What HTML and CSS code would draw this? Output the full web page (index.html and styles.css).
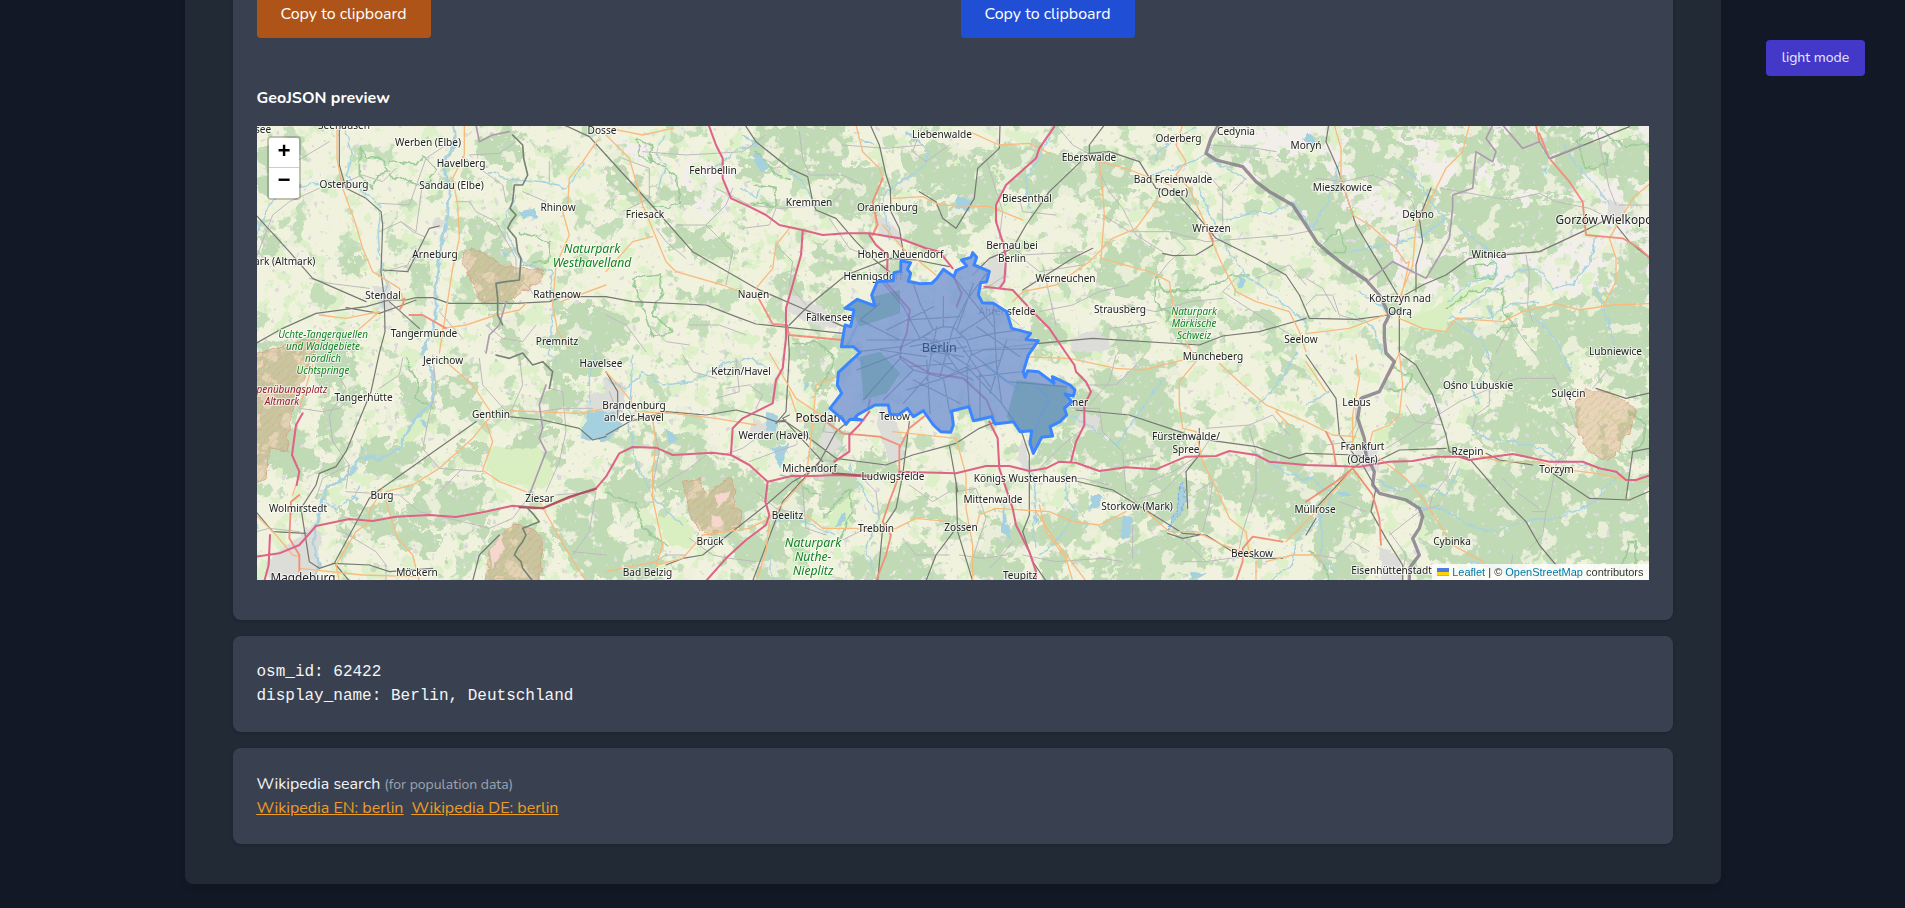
FILE: index.html
```html
<!DOCTYPE html>
<html lang="en">
<head>
<meta charset="utf-8">
<title>GeoJSON preview</title>
<link rel="stylesheet" href="styles.css">
</head>
<body>
<button class="mode">light mode</button>
<main class="page">
  <section class="card first">
    <div class="actions">
      <div><button class="btn orange">Copy to clipboard</button></div>
      <div><button class="btn blue">Copy to clipboard</button></div>
    </div>
    <h2 class="title">GeoJSON preview</h2>
    <div class="map">
      <svg class="tiles" viewBox="257 126 1392 454" width="1392" height="454">
        <defs>
          <filter id="rough" filterUnits="userSpaceOnUse" x="240" y="110" width="1430" height="490">
            <feTurbulence type="fractalNoise" baseFrequency="0.07" numOctaves="4" seed="4" result="n"/>
            <feDisplacementMap in="SourceGraphic" in2="n" scale="38" xChannelSelector="R" yChannelSelector="G"/>
          </filter>
          <filter id="wiggle" filterUnits="userSpaceOnUse" x="240" y="110" width="1430" height="490">
            <feTurbulence type="fractalNoise" baseFrequency="0.12" numOctaves="2" seed="9" result="n"/>
            <feDisplacementMap in="SourceGraphic" in2="n" scale="7" xChannelSelector="R" yChannelSelector="G"/>
          </filter>
          <filter id="meadow" filterUnits="userSpaceOnUse" x="257" y="126" width="1392" height="454" color-interpolation-filters="sRGB">
            <feTurbulence type="fractalNoise" baseFrequency="0.055" numOctaves="4" seed="21"/>
            <feColorMatrix values="0 0 0 0 .87  0 0 0 0 .94  0 0 0 0 .79  22 0 0 0 -12.4"/>
          </filter>
          <filter id="woods" filterUnits="userSpaceOnUse" x="257" y="126" width="1392" height="454" color-interpolation-filters="sRGB">
            <feTurbulence type="fractalNoise" baseFrequency="0.042" numOctaves="5" seed="7"/>
            <feColorMatrix values="0 0 0 0 .765  0 0 0 0 .87  0 0 0 0 .72  0 25 0 0 -15.4"/>
          </filter>
          <filter id="clearing" filterUnits="userSpaceOnUse" x="257" y="126" width="1392" height="454" color-interpolation-filters="sRGB">
            <feTurbulence type="fractalNoise" baseFrequency="0.05" numOctaves="4" seed="33"/>
            <feColorMatrix values="0 0 0 0 .94  0 0 0 0 .945  0 0 0 0 .87  0 0 25 0 -15"/>
          </filter>
          <filter id="hamlet" filterUnits="userSpaceOnUse" x="257" y="126" width="1392" height="454" color-interpolation-filters="sRGB">
            <feTurbulence type="fractalNoise" baseFrequency="0.16" numOctaves="2" seed="12"/>
            <feColorMatrix values="0 0 0 0 .86  0 0 0 0 .86  0 0 0 0 .85  20 0 0 0 -13.9"/>
          </filter>
          <pattern id="hatch" width="18" height="18" patternUnits="userSpaceOnUse" patternTransform="rotate(45)"><rect width="18" height="18" fill="#d9a679" fill-opacity=".38"/><path d="M4 0V18" stroke="#c98f72" stroke-opacity=".45" stroke-width="2"/></pattern>
        </defs>
        <rect x="257" y="126" width="1392" height="454" fill="#f1f2de"/>
        <g transform="translate(256 125) scale(.333333)">
          <path fill="#f2eee9" d="M2885 0L2855 95 2960 125 3040 200 3150 300 3215 380 3335 465 3420 520 3700 500 3900 500 4200 550V0ZM3430 684L3500 684 3580 900 3600 990 3520 960 3450 770Z"/>
          <g fill="#f2eee9"><path d="M1290 100L1430 130 1420 260 1370 290 1270 210ZM1050 40L1190 60 1170 110 1060 100ZM1900 260L2030 250 2080 320 1880 350Z"/></g>
        </g>
        <rect x="257" y="126" width="1392" height="454" filter="url(#meadow)"/>
        <rect x="257" y="126" width="1392" height="454" filter="url(#woods)"/>
        <g filter="url(#rough)"><g class="forest" transform="translate(256 125) scale(.333333)">
          <path d="M0 70L110 80 140 180 60 210 0 190ZM660 0L780 30 800 120 690 120ZM640 260L730 300 770 400 790 500 720 560 640 480 620 380ZM900 540L1060 540 1060 700 900 690ZM10 330L70 340 60 390 0 400ZM460 430L520 400 530 480 460 500ZM0 640L130 650 150 690 0 690ZM240 380L330 400 310 450 240 430ZM180 620L310 640 300 690 190 690ZM720 560L780 600 800 690 720 690Z"/>
          <g transform="translate(1050)"><path d="M0 130L90 150 110 230 0 240ZM180 300L350 320 390 380 340 420 200 350ZM450 0L730 0 720 150 540 130 440 80ZM620 340L740 370 720 430 620 410ZM490 430L620 470 610 530 500 490ZM230 500L330 490 340 540 250 550ZM720 130L840 110 830 250 700 280 640 240ZM850 240L1060 250 1060 400 900 360ZM890 50L1060 60 1060 220 890 210ZM560 650L680 640 690 700 560 700ZM390 90L520 130 470 170 390 150ZM150 180L240 190 260 240 160 230ZM0 560L80 580 100 640 0 660ZM640 480L720 540 700 590 640 560Z"/></g>
          <g transform="translate(2100)"><path d="M0 100L110 80 130 180 120 300 0 310ZM130 60L380 80 430 110 520 150 500 260 440 280 420 190 270 220 140 190ZM450 100L540 110 540 180 450 170ZM570 230L710 220 740 250 690 330 600 320ZM490 350L610 330 610 430 570 530 500 500 420 440 440 370ZM400 430L600 450 560 530 430 480ZM240 110L400 110 420 230 280 200ZM630 450L740 450 740 550 820 600 760 650 640 600ZM790 30L900 90 1060 90 1060 300 930 200 860 120 770 100ZM640 600L830 560 850 620 690 684ZM220 570L330 600 310 690 240 690ZM440 600L560 590 540 690 450 690ZM850 560L970 560 960 620 840 610ZM300 370L420 400 390 430 300 390Z"/></g>
          <g transform="translate(3150)"><path d="M120 0L560 0 540 80 500 190 430 240 420 340 360 350 330 240 260 190 130 150 120 80ZM220 10L340 80 330 150 380 240 460 130 450 40ZM0 100L100 160 130 280 270 350 250 460 180 460 60 380 0 290ZM440 220L560 190 680 240 800 210 840 300 700 370 490 390 430 340ZM580 0L830 0 830 190 720 220 560 190 570 100ZM830 40L1030 40 1030 180 900 160 830 110ZM360 380L480 400 440 480 370 460ZM600 560L860 500 1030 490 1030 690 700 690 660 590ZM360 600L600 590 640 690 310 690ZM940 360L1030 340 1030 520 920 540ZM170 450L260 420 270 500 200 490Z"/></g>
          <g transform="translate(0 684)"><path d="M0 0L120 0 130 170 90 290 40 340 0 330ZM150 0L300 10 300 110 180 130ZM40 290L90 220 190 290 170 350 70 380ZM200 150L290 160 260 300 190 260ZM430 90L500 70 520 190 440 220ZM560 70L670 80 660 180 550 170ZM330 270L510 260 510 330 390 390 300 350ZM510 390L680 370 720 490 680 560 520 530 430 480ZM250 470L420 480 560 560 540 610 430 570 260 550ZM870 0L1060 0 1060 50 900 90ZM900 450L1060 430 1060 690 980 690 900 560ZM690 550L800 500 880 560 860 690 700 690ZM780 230L900 220 900 340 850 370 750 320ZM600 270L680 270 690 350 620 350ZM780 130L990 100 1000 190 780 180ZM200 330L270 330 250 390 180 380Z"/></g>
          <g transform="translate(1050 684)"><path d="M600 0L700 0 690 90 630 130 580 70ZM150 330L370 330 470 380 480 480 400 540 300 540 240 440 130 390ZM30 320L140 400 140 460 0 460 0 340ZM480 380L620 390 600 500 470 540ZM640 300L760 370 740 520 670 510 640 410ZM0 550L160 600 170 690 0 690ZM370 550L560 520 540 690 390 690ZM730 620L880 580 960 570 1000 690 700 690ZM610 200L700 200 720 320 610 320ZM890 410L1000 450 1060 530 960 520 890 470ZM760 300L890 320 890 370 740 370ZM180 430L420 380 480 450 410 540 270 520ZM60 220L190 260 280 250 360 300 200 340Z"/></g>
          <g transform="translate(2100 684)"><path d="M360 70L450 50 580 60 650 200 700 270 650 310 550 330 450 330 370 330 350 200 300 220 330 130ZM550 20L660 40 650 190 530 170ZM240 280L350 220 350 330 240 330ZM380 360L620 340 690 370 680 500 600 520 480 420 390 400ZM730 320L960 320 1050 350 1050 430 880 480 780 420ZM690 370L780 410 770 530 690 540 640 510ZM80 480L200 510 230 570 160 610 80 580ZM250 470L330 460 420 500 530 490 530 560 400 540 290 600 240 550ZM510 560L680 540 760 590 730 690 500 690 480 620ZM260 600L330 590 340 690 260 690ZM890 260L1000 220 1050 230 1050 350 930 330ZM960 420L1050 420 1050 540 950 520ZM60 600L200 620 180 690 50 690ZM430 220L540 240 590 310 440 320ZM940 20L1050 30 1050 90 980 80ZM380 600L470 620 480 690 390 690Z"/></g>
          <g transform="translate(3150 684)"><path d="M290 30L400 0 500 10 490 100 390 130 300 90ZM520 0L760 0 800 60 790 120 640 170 560 120ZM560 150L800 180 800 310 680 320 570 250ZM500 170L600 200 570 310 500 270ZM240 190L390 170 400 270 250 290ZM230 330L440 310 450 440 370 460 220 400ZM360 460L480 360 640 330 730 370 820 340 930 380 970 440 870 460 830 580 700 600 660 690 560 620 440 560 360 530ZM880 320L1030 370 1030 530 820 560 800 420ZM750 560L1030 500 1030 640 760 640ZM360 570L520 540 640 600 590 650 360 650ZM60 380L160 360 190 490 130 570 190 690 80 690 20 560ZM0 350L90 340 90 420 0 430ZM880 0L1030 0 1030 150 940 130 870 80ZM960 190L1030 200 1030 320 940 320Z"/></g>
        </g></g>
        <rect x="257" y="126" width="1392" height="454" filter="url(#clearing)" opacity=".85"/>
        <rect x="257" y="126" width="1392" height="454" filter="url(#hamlet)"/>
        <g filter="url(#wiggle)"><g transform="translate(256 125) scale(.333333)">
          <g class="lawn"><path d="M3520 560L3570 520 3640 490 3720 450 3710 480 3600 540 3560 620 3500 615 3440 580ZM700 970L850 970 900 1050 860 1090 730 1070 690 1030ZM1190 1180L1280 1170 1310 1210 1310 1270 1240 1260ZM420 920L500 870 540 850 480 940 430 960ZM3360 910L3400 900 3400 950 3350 960ZM2930 450L2980 445 3000 500 2940 510ZM1720 1170L1800 1090 1780 1200 1710 1220Z"/></g>
          <g class="town"><path d="M350 480L400 480 410 560 370 550ZM1600 505L1700 550 1760 600 1700 610 1590 560ZM2210 380L2250 430 2240 490 2180 470ZM2440 640L2520 610 2570 660 2540 684 2450 680ZM2300 940L2320 1000 2340 1080 2280 1000ZM1490 880L1550 900 1540 950 1480 930ZM3370 1260L3430 1300 3440 1368 3380 1368ZM30 1310L170 1200 200 1230 180 1368 40 1368ZM4060 220L4110 240 4100 290 4050 290ZM3300 970L3360 960 3370 1040 3320 1030ZM1860 260L1930 320 1940 360 1870 330ZM1000 810L1050 800 1060 870 990 850ZM1040 760L1110 780 1100 860 1060 880ZM2470 860L2540 880 2520 920 2460 900ZM1710 890L1760 960 1720 1000 1690 950ZM1890 790L1950 1000 1900 1010 1860 900ZM530 280L565 280 560 310 530 310Z"/></g>
          <g class="park"><path d="M310 70L330 100 370 95 400 140 360 150 350 190 310 150ZM400 110L480 120 500 90 540 130 520 170 480 180 430 160 400 150M790 320L880 350 880 410 800 420M1140 40L1190 60 1180 110 1150 90ZM1180 100L1260 150 1270 230 1240 250 1190 240M1500 80L1560 150 1600 160 M1500 180L1560 190 1560 240 1480 235M1130 460L1210 450 1220 500 1190 570 1250 620 1190 640ZM1610 660L1680 650 1730 690 1730 720 1680 800M2700 455L2730 500 2840 495 2930 450 2980 450M2700 455L2690 530 2740 560 2730 590M3200 360L3250 310 3270 380 3200 380M3650 420L3720 415 3715 460 3660 455ZM3570 550L3650 500 3740 490 3740 560 3780 600 3720 620M3960 50L4030 10 4100 60 4180 60M3960 50L3990 130 4060 120 4050 80M3410 730L3470 750 3450 800 3390 790M4120 1250L4140 1250 4140 1350 4090 1350ZM4120 860L4170 900 4160 960 4120 980M450 700L490 780 480 820 530 850M1700 1180L1780 1090 1790 1150 1750 1250M1570 1050L1620 1060 1640 1090 1690 1110M1050 1100L1140 1140 1160 1210 1230 1260M3160 1280L3200 1310 3220 1368"/></g>
          <g class="river"><path d="M590 5L600 60 560 110 580 190 575 270 555 360 540 480 540 580 500 684 530 740 530 830 470 890 430 970 370 1000 310 1000 270 1060 210 1090 190 1160 170 1250 190 1320 170 1368" stroke-width="9"/><path d="M270 20L290 90 270 150 330 210 375 240 365 300 370 380 390 470 380 540M0 330L30 260 80 190 190 175M700 140L760 160 860 170 930 190 990 110M780 210L740 290 760 340 790 400 840 430 885 440 890 540 880 684 900 720M1020 684L1000 760 1000 840M1050 760L1110 790 1160 740 1220 780 1310 770 1400 720 1480 700 1530 730M1220 30L1200 90 1230 120 1210 190M1450 70L1510 60 1460 30M1450 70L1370 130M1600 140L1640 170 1670 220M1950 20L2020 80 2000 130 1950 160 1880 210 1890 280 1900 340M1510 190L1500 220 1460 190M2310 160L2350 100 2390 20M2310 160L2320 250M2700 100L2740 50 2820 10M2690 150L2760 130 2850 90 2880 110 2970 160M2830 190L2860 260 2900 350 2960 440 3050 510 3150 590M2900 290L3000 260 3060 260 3110 230 3170 310 3220 220 3250 120M3430 120L3480 160 3530 240 3570 280 3500 330 3400 360 3280 380M3610 310L3680 360 3720 420 3720 450 3640 470 3580 530M3580 580L3700 580 3760 540 3850 530M3610 560L3700 500 3780 440 3850 430 3890 490 3950 480 4000 410 4020 340M3920 60L3960 120 4020 180 4060 240M4020 480L4050 570 4080 684M3600 590L3680 650 3700 700M3830 570L3900 640 3940 740M3310 500L3400 560 3460 560M3270 560L3350 600 3380 684M3640 910L3690 940 3780 950 3860 970 3910 1010 3990 1020M3480 1150L3560 1150 3640 1200 3720 1220 3800 1190 3900 1180 4000 1140 4080 1060M3360 1060L3420 1100 3500 1080 3570 1110 3610 1030M2990 980L3080 1040 3180 1070 3230 1110 3190 1180 3120 1250 3110 1320 3040 1368M2480 890L2580 960 2640 880 2690 800 2720 770M2490 900L2450 870M2430 1030L2430 1120 2460 1160 2410 1240 2350 1290M2330 1040L2340 1130 2330 1200 2340 1270M1130 684L1120 900 1140 1020 1200 1130 1280 1200M1780 1020L1820 1100 1870 1180 1830 1260 1850 1340M1550 1190L1620 1180 1740 1230M1540 1290L1550 1368M310 1080L290 1120 240 1150 200 1130M3180 1130L3200 1220 3190 1300 3240 1340M3150 840L3220 800M3120 684L3080 760 3000 850M3690 730L3650 800 3670 840M3640 1310L3900 1368"/></g>
          <g class="lake"><path d="M785 260L840 250 840 275 800 280ZM735 375L765 380 750 395ZM1500 80L1540 130 1520 140 1495 115ZM1810 40L1860 60 1830 60ZM2100 210L2150 230 2140 260 2100 250ZM2950 450L2970 460 2965 490 2945 490ZM3150 20L3180 40 3170 60 3150 50ZM3855 130L3870 125 3870 150ZM970 940L1000 860 1070 860 1100 900 1050 950ZM1230 910L1270 940 1240 960ZM1570 1030L1550 970 1600 950 1590 1000ZM1530 860L1570 870 1560 920 1530 910ZM1640 770L1660 775 1650 800ZM1740 1200L1760 1160 1770 1190 1740 1210ZM2505 1110L2540 1110 2530 1150 2500 1150ZM2600 1170L2630 1180 2620 1240 2600 1240ZM2240 1130L2260 1220 2270 1250 2240 1220ZM2330 1170L2350 1180 2340 1200ZM2800 1340L2850 1345 2810 1368ZM3240 1100L3290 1105 3260 1120ZM3700 540L3720 600 3700 560ZM310 960L330 970 320 990ZM490 890L510 890 510 910ZM280 1110L310 1120 300 1130ZM1120 1290L1130 1300 1130 1330ZM2670 1180L2740 1200 2740 1200Z"/><path class="reserve" d="M2735 1215L2770 1130 2770 1080 2780 1070 2785 1100 2790 1130 2760 1180 2740 1215Z"/></g>
          <g class="range"><path d="M625 380L665 372 750 425 800 430 865 435 850 470 800 500 760 530 680 530 640 460 620 410ZM0 684L130 650 190 640 130 790 100 900 95 980 40 965 30 1060 0 1075ZM770 1195L835 1215 860 1240 850 1368 690 1368 700 1270 750 1220ZM1280 1070L1330 1060 1350 1110 1420 1060 1440 1090 1430 1150 1460 1160 1450 1210 1350 1230 1310 1190ZM3990 795L4060 800 4140 850 4120 930 4090 940 4090 980 4050 1010 4000 980 3960 910 3960 830Z"/></g>
          <g class="pink"><path d="M700 1270L740 1230 740 1280 710 1330ZM1380 1110L1420 1100 1410 1130 1380 1150ZM1370 1170L1400 1180 1390 1210 1370 1210Z"/></g>
        </g></g>
        <g transform="translate(256 125) scale(.333333)">
          <g class="minor">
            <path d="M0 400L50 270 100 230 190 190M120 110L220 50M370 235L460 240 510 100 570 60M370 320L435 290 480 320 500 170M435 290L470 320 505 335M270 170L320 150 380 170 420 130M600 230L640 230 660 260 720 290 780 400 780 450 820 490 840 520M640 90L730 85 780 50M620 95L670 130 740 180 750 230M160 460L220 475 340 490M385 440L455 420 480 370M800 200L870 230M880 110L880 170M840 600L800 650 740 640 690 600M550 560L620 640"/>
            <path d="M1160 80L1290 90 1380 85 1460 80 1530 30M1100 100L1180 130 1180 220 1100 260M1380 190L1480 240 1570 250 1720 240 1770 190M1260 300L1350 300 1430 380 1410 480M1350 300L1410 240 1430 190M1460 310L1540 300 1560 250M1560 360L1610 410 1600 480 1650 540M1630 20L1640 100 1660 150 1760 150 1820 180M1720 280L1780 370 1850 400M1050 570L1110 600 1170 680M1180 600L1230 650 1300 660M1300 600L1390 600 1470 630M1200 310L1230 350 1290 400M2000 0L1970 80 2010 110 2080 60M1760 60L1890 70 2000 60"/>
            <path d="M2190 100L2240 260 2230 340 2300 390 2480 380M2400 0L2450 60 2560 120M2300 400L2350 440 2480 420M2400 270L2300 260 2290 220M2540 270L2620 320 2740 320 2850 350 2970 340 3100 330 3200 310M2530 140L2560 200 2600 250 2640 330 2720 380M2850 140L2900 200 2900 300 2860 340M2970 160L2930 200M2740 320L2790 370 2740 410 2700 460M2360 420L2400 600M2600 540L2700 560 2800 530 2900 520M2560 610L2650 600 2700 590M2350 560L2450 540 2530 500 2620 480M2960 440L2900 500 2960 540 3040 590 3120 640M3000 460L3100 420 3150 480M2250 380L2250 450 2190 490 2110 500M2190 520L2290 600M2860 60L3000 70 3060 80"/>
            <path d="M3180 160L3260 170 3350 150 3420 180 3470 230 3480 270M3555 190L3700 215 3760 225 3850 205 3900 230 4000 250 4060 280M3420 380L3430 320 3490 300M3810 390L3820 450 3815 540 3830 590M3750 385L3860 380M4020 0L4040 100 4060 190 4080 240M4090 240L4200 240M3150 540L3180 510 3230 510 3250 570 3320 590M3150 460L3200 490 3240 560M3770 590L3800 640 3840 690M3720 684L3770 590"/>
            <path d="M210 684L270 790 220 870 230 950 280 1020 275 1040M130 850L200 860 250 850 300 800M370 790L430 750 440 700M530 690L540 790 520 870 500 970 550 1030 680 1040M270 1100L430 1110 490 1160 620 1190 700 1210 770 1180 830 1100M0 1220L40 1210 130 1220M260 1220L360 1280 390 1320 390 1368M550 1100L620 1030M670 700L680 780 760 870 800 780 790 690M880 790L920 800 930 920 910 1010 870 1100M850 860L920 850 1010 850M900 1110L1020 1100 1000 1220 950 1290M950 1280L1050 1290M270 1090L280 1020 200 1060 180 1120"/>
            <path d="M1190 890L1210 980 1190 1080 1200 1100M1200 1090L1300 1030 1350 990M1410 790L1480 780 1520 810 1500 850M1060 800L1080 850 1150 890M1280 690L1310 740 1380 760M1380 820L1450 800 1440 700M1500 1100L1560 1150 1600 1160M1400 990L1460 970 1500 940M1720 860L1700 920 1790 930M1750 1250L1830 1210 1900 1220M1870 1180L1860 1100 1820 1060M1300 1240L1370 1290 1420 1300 1500 1310M1620 960L1560 980 1480 1010M1640 1090L1650 1210 1710 1230M1960 1080L2030 1130 2080 1100M1940 1240L1980 1290 2080 1290M1680 1000L1730 1010 1770 960M1180 1320L1230 1290 1290 1290"/>
            <path d="M2450 850L2530 850 2540 920 2600 980 2610 1100 2650 1140M2470 920L2420 960 2350 1030M2610 1010L2700 990M2390 1060L2480 1060 2560 1080M2680 1070L2750 1040 2830 990 2870 930M2490 780L2580 780 2640 720 2670 684M2650 1120L2720 1100 2790 1030M2820 1100L2870 1070 2860 1140 2840 1220M2850 910L2980 900 3050 870 3080 910 3100 930M2980 910L3000 980 3000 1100M3000 1090L2960 1220 2950 1270M2250 1290L2180 1300 2110 1290M2630 1200L2630 1300M2300 1290L2400 1310 2540 1300 2600 1310M2750 1220L2810 1270 2850 1310M2500 840L2560 770 2580 690M2780 1310L2850 1310 2990 1290M2200 1330L2230 1300 2270 1250M2100 1100L2160 1090 2190 1180 2150 1300M2160 1200L2090 1200"/>
            <path d="M3210 960L3290 950 3310 900M3390 970L3440 940 3530 880 3610 830 3680 800 3750 770 3790 760 3900 760M3650 910L3660 870 3700 840 3700 800 3740 740M3900 890L3960 940 3900 1020 3880 1130 3870 1160M3830 1160L3870 1160 3860 1230 3820 1270M3520 1150L3530 1110 3580 1050 3600 1010M3250 1130L3330 1160M3400 1230L3490 1160 3550 1140M3180 1290L3240 1300 3290 1250 3340 1280M3770 1290L3760 1368M3890 750L3920 800 3960 900M3400 1220L3450 1290 3440 1340M3300 850L3300 900 3280 930M3740 1060L3780 1100 3850 1150M3690 690L3710 720 3690 740M4060 730L4010 790M3450 840L3480 890 3560 900"/>
          </g>
          <g class="rail">
            <path d="M250 10L250 120 270 190 330 220 375 260 380 300 375 440 385 520 387 620 370 684 345 800 270 980 240 1025 190 1045 180 1080 135 1150 160 1310 190 1330 235 1315 340 1120 370 1095 660 890M0 270L100 380 170 460 330 530M0 655L80 610 180 565 330 545 400 525 450 525 480 518 530 518 580 535 780 535 880 530 920 515 1050 515M270 548L370 565 440 540 480 525M400 530L490 610M380 435L455 440 480 390 520 310 550 303M925 0L1000 35 1050 90"/>
            <path d="M1050 90L1200 255 1310 380 1500 490 1650 555 1770 608M1050 515L1130 530 1350 540 1440 575 1500 597 1760 625M1467 0L1500 50 1600 130 1655 155 1670 230 1680 255 1740 280 1800 350 1850 400 1900 440M1843 0L1870 60 1890 150 1903 190 1905 260 1930 310 1945 400M1600 600L1660 540 1770 450 1900 400 1980 405 2080 425M1990 200L2040 230 2060 280 2100 310M1595 600L1600 684 1590 860 1560 895M2100 310L2155 220 2165 130 2230 70 2232 0"/>
            <path d="M2545 0L2500 60 2500 85 2380 200 2310 300 2270 370 2200 400 2150 450M2500 85L2560 80 2650 110 2700 190 2760 200 2830 280 2880 340 3000 400 3090 450 3130 510 3160 580 3300 583 3400 570 3430 550M2720 385L2750 392 2820 390 2870 360 2870 340M2120 680L2350 655 2510 640 2830 660 2900 633 3010 620 3080 600 3150 580M2300 495L2450 400 2510 370"/>
            <path d="M3218 0L3210 50 3245 130 3300 300 3360 400 3425 510M3525 190L3490 280 3500 350 3480 420 3480 500M3430 520L3500 480 3570 450 3640 400 3740 390 3850 380 4000 310 4060 280M4080 300L4120 350 4200 415M3885 100L4120 5M3430 560L3430 684M0 1160L50 1220 150 1225M230 1315L340 1320 400 1340 530 1330M240 1320L280 1368M760 875L860 885 970 910 1010 945 1050 935M650 1368L670 1290 730 1230"/>
            <path d="M1050 930L1120 890 1230 860 1350 870 1440 855 1520 875 1560 890 1590 885M1050 740L1085 800 1085 880M1560 890L1590 890 1640 925 1740 1000 1890 1020 1970 990 2100 955M1230 1320L1280 1300 1340 1290 1530 1140 1610 1070 1680 1030 1740 920 1800 870M1690 1010L1580 1130 1490 1368M1600 870L1580 880 1700 1010M1960 890L1940 1050 1920 1150 1880 1210 1865 1368M2010 1368L2040 1290 2100 1210M2080 960L2105 1100M2100 955L2170 910 2220 890M2100 1070L2105 1220 2150 1368M2290 900L2320 990 2320 1170 2300 1220 2330 1310 2370 1368M2460 855L2620 870 2770 920 2820 940 3000 965 3100 1000 3150 985M2460 1068L2570 1095 2660 1150 2780 1225 2850 1230 2930 1280 3000 1300 3080 1300M2830 910L2830 990 2790 1040 2795 1150M2735 1225L2780 1240 2830 1230"/>
            <path d="M3150 985L3300 990 3360 1010 3430 975 3570 970M3430 684L3480 720 3530 810 3570 930 3580 980 3640 1000 3760 1140 3810 1190 3850 1260 3900 1320M3170 1160L3290 1030 3320 1010M3150 690L3240 820 3250 930 3310 1010M3320 1020L3360 1090 3345 1160 3390 1240 3440 1320 3440 1368M3690 985L3730 1005 3830 1020M3890 1045L3940 1080 4000 1120 4120 1125 4200 1090M4020 790L4110 820 4200 800M4110 1120L4130 980 4180 970M3150 1230L3180 1180"/>
          </g>
          <g class="primary">
            <path d="M243 0L243 100 260 190 300 300 320 370 350 440 430 490 440 520M190 570L270 580 370 560 300 620M625 0L625 90 590 160 605 240 610 340 590 430 570 560 550 684M560 610L630 600 720 570 790 555 810 535M1025 45L980 110 940 160 935 240 920 260 940 330 900 420 890 540 905 620 940 670M915 530L1050 480"/>
            <path d="M1050 30L1120 100 1160 240 1230 410 1260 440 1400 480 1480 510M1050 440L1130 350 1190 335M1250 10L1160 30 1060 10M1800 0L1820 80 1870 130 1880 160 1850 230 1860 300 1850 330M1600 310L1560 360 1550 430 1500 490M1910 220L2000 215 2050 240 2200 245 2300 285M2490 1368L2400 1250 2340 1160M2140 20L2230 60 2320 55 2380 85M1880 300L1940 370 2040 450"/>
            <path d="M2530 110L2540 200 2545 270 2535 400 2570 410 2680 440 2740 470 2760 600 2810 684M2530 110L2610 130 2660 150 2740 180M2710 215L2640 310 2570 340 2500 410 2400 480 2300 500 2270 530M2780 0L2760 60 2790 110 2760 150 2800 190 2840 280 2890 400 2940 500 3000 530 3100 560 3130 620 3150 680M2330 650L2230 640M3235 0L3255 70 3255 160 3290 270 3340 300 3420 370 3450 415 3460 410 3430 540M3640 0L3620 80 3570 130 3530 210 3480 300 3470 420 3430 520M4200 160L4130 220 4060 340 4080 400 4080 470 4040 545M3150 626L3280 610 3400 565M3430 580L3500 610 3570 620 3600 580 3740 590 3800 560 3900 535 3970 555 4070 540 4200 535"/>
            <path d="M170 720L130 850M570 710L650 780 710 870 690 890 650 940 550 1030 470 1080 390 1100M690 890L710 950 680 1035 730 1070 810 1100M760 857L970 865 1050 850M120 1080L110 1110M390 1130L425 1240 470 1290 490 1368M380 1090L340 1160 340 1190 300 1220 240 1320 250 1368M850 1130L940 1290 990 1368M0 1170L60 1230 110 1290 130 1295M130 1330L320 1350 480 1355"/>
            <path d="M1050 740L1120 820 1140 860 1250 865 1380 880 1500 900M1190 880L1200 960 1190 1040 1190 1120 1220 1260 1200 1320 1280 1300 1340 1230 1480 1210 1540 1180 1650 1060 1670 900 1680 780 1780 740M1600 800L1630 890 1700 870M1650 1170L1700 1210 1800 1210 1840 1220 1920 1210 1980 1180 2080 1190M1540 1190L1530 1280 1500 1368M1540 684L1620 820 1710 880M1910 920L2100 940M1050 1340L1200 1310M2100 940L2130 1050 2130 1150 2150 1260 2150 1368M2320 696L2440 700 2580 730 2660 735 2800 700M2160 1210L2170 1170 2220 1150 2380 1160 2450 1190 2530 1200 2610 1160M2350 1140L2370 1220 2430 1300 2450 1368"/>
            <path d="M2820 710L2770 770 2770 840 2780 910 2820 920 2840 1010 2890 1110 2920 1180 2970 1220 2980 1290M2890 715L2960 780 3030 840 3150 890M2660 1150L2740 1220 2820 1220 2900 1260 2990 1290M3090 1250L3170 1170 3250 1080 3290 1030M3150 890L3230 930 3300 935M3100 900L3060 860M3030 1310L3110 1290 3180 1290 3200 1310M3300 690L3310 760 3290 870 3290 970M3430 684L3440 780 3430 870 3400 900 3350 920 3340 960M3370 1000L3450 1060 3500 1120 3590 1260 3680 1310 3720 1350M3670 990L3730 1010 3850 1010 3900 1030 4020 1045 4140 1070 4200 1070M3430 684L3400 750M3000 1310L3000 1368M3150 710L3210 800"/>
          </g>
          <g class="trunk"><path d="M1505 515L1550 597 1590 600 1600 630 1760 645M460 570L500 570 570 610M445 520L440 540 430 555M1880 160L1850 230 1865 300 1850 330M3240 1070L3290 1030 3350 1110 3370 1180 3375 1260M3210 920L3230 960 3240 1020M3240 1070L3150 1130M3850 25L3880 100 3940 170 3980 230 3990 330 4100 340 4150 370 4200 415M130 1110L105 1130 100 1240 130 1290 130 1340M1710 890L1760 925 1870 935 1930 960 1930 1050 1900 1130 1880 1190 1905 1230 1890 1290 1860 1368M3840 0L3850 50M2960 1270L2990 1235 3080 1250M2960 1270L2960 1310 2940 1368M2860 320L2870 350M1930 970L1960 910 2010 870"/></g>
          <g class="motorway"><path d="M1358 0L1380 60 1400 100 1400 160 1425 220 1480 245 1530 270 1570 300 1640 315 1700 330 1770 325 1840 325 1930 340 2010 370 2050 380 2090 430M1640 320L1635 390 1610 480 1590 550 1590 640 1585 684 1580 730 1560 765 1550 835 1460 880 1430 910 1425 985M1840 330L1860 360 1895 390 1893 450M2395 5L2350 70 2340 100 2250 180 2220 240 2220 290 2240 350 2250 400 2245 470 2230 490M2185 485L2270 495 2330 560 2380 610 2430 684 2455 720 2460 740 2490 770 2505 800 2485 840 2485 900 2460 950 2445 1010M0 1295L70 1285 130 1260 180 1203 280 1182 350 1188 420 1175 520 1170 600 1176 680 1162 770 1142 860 1150 960 1110 1020 1090 1050 1055 1090 985 1130 966 1200 968 1250 990 1370 983 1425 990 1480 1020 1535 1070 1610 1052 1670 1053 1740 1050 1850 1055M1535 1070L1528 1130 1540 1170 1530 1200 1470 1245 1410 1300 1350 1368M1735 1010L1780 980 1780 930 1810 900 1840 860M1930 1040L2100 1045 2190 1023 2260 1023 2320 1038 2370 1030 2410 1010 2460 1013 2530 1038 2610 1027 2700 1033 2790 995 2880 993 2920 978 3000 990 3040 1010 3150 1020 3310 1025 3400 1010 3470 1008 3540 995 3610 995 3640 1005 3770 987 3880 1010 3980 1010 4030 1030 4080 1040 4110 1065 4140 1065 4200 1045M2200 890L2225 940 2230 1030 2270 1150 2280 1200 2320 1280 2340 1340 2340 1368M140 865L120 900 108 990 130 1040 122 1080M42 1230L38 1320 25 1368"/></g>
          <path class="maroon" d="M790 1147L860 1150 940 1115 1020 1092M1730 1045L1830 1052"/>
          <g class="border"><path d="M660 0L670 50 710 30 760 20M3710 0L3690 40 3720 80 3710 110 3660 80 3650 190 3590 210 3590 250 3580 340 3540 410 3510 460 3410 410 3340 465M3740 0L3800 70 3850 50 3880 100 3980 60M750 530L730 600 700 630 690 684M870 780L850 840 860 910 850 940 870 980 820 1110"/></g>
          <g class="state"><path d="M770 30L785 45 800 60 803 100 815 150 800 180 775 180 770 230 762 250 780 270 765 290 755 310 780 340 785 380 795 400 790 465 750 470 720 475 725 520 725 570 740 600M720 690L760 700 800 684 830 720 860 710 890 740 880 790M810 1145L830 1165 850 1190 825 1200 800 1210 810 1230 800 1250 785 1270 775 1290 795 1310 800 1330 830 1368"/></g>
          <g class="frontier"><path d="M2885 5L2865 40 2850 85 2880 105 2960 125 3000 170 3040 200 3110 240 3150 300 3185 355 3220 385 3270 425 3330 465 3370 510 3400 570 3385 600 3385 640 3390 684 3415 710 3385 770 3370 800 3315 820 3305 880 3325 940 3330 990 3355 1040 3350 1080 3370 1105 3450 1125 3490 1150 3500 1175 3490 1210 3470 1240 3490 1290 3460 1330 3460 1368"/></g>
        </g>
        <g class="labels">
          <text x="263" y="133">see</text><text x="344" y="128.500">Seehausen</text><text x="428" y="145.500">Werben (Elbe)</text><text x="461" y="167">Havelberg</text><text x="344" y="188">Osterburg</text><text x="451.500" y="189">Sandau (Elbe)</text><text x="558" y="211">Rhinow</text><text x="602" y="133.500">Dosse</text><text x="435" y="257.500">Arneburg</text><text x="273" y="264.500">Bismark (Altmark)</text><text x="383" y="299">Stendal</text><text x="557" y="298">Rathenow</text><text x="424" y="336.500">Tangermünde</text><text x="557" y="345">Premnitz</text>
          <text x="713" y="173.500">Fehrbellin</text><text x="645" y="218">Friesack</text><text x="809" y="206">Kremmen</text><text x="887.500" y="210.500">Oranienburg</text><text x="942" y="138">Liebenwalde</text><text x="900.500" y="258">Hohen Neuendorf</text><text x="873" y="279.500">Hennigsdorf</text><text x="753.500" y="298">Nauen</text><text x="829.500" y="321">Falkensee</text>
          <text x="1089" y="161">Eberswalde</text><text x="1178.500" y="142">Oderberg</text><text x="1236" y="134.500">Cedynia</text><text x="1306" y="148.500">Moryń</text><text x="1173" y="183">Bad Freienwalde<tspan x="1173" dy="12.500">(Oder)</tspan></text><text x="1027" y="202">Biesenthal</text><text x="1211.500" y="231.500">Wriezen</text><text x="1012" y="249">Bernau bei<tspan x="1012" dy="12.500">Berlin</tspan></text><text x="1065.500" y="281.500">Werneuchen</text><text x="1007" y="315">Ahrensfelde</text><text x="1120" y="313">Strausberg</text>
          <text x="1342.500" y="190.500">Mieszkowice</text><text x="1418" y="218">Dębno</text><text class="l start" x="1555.500" y="224">Gorzów Wielkopolski</text><text x="1489" y="258">Witnica</text><text x="1400" y="302">Kostrzyn nad<tspan x="1400" dy="12.500">Odrą</tspan></text><text x="1301" y="343">Seelow</text><text x="1615.500" y="354.500">Lubniewice</text>
          <text x="443" y="364">Jerichow</text><text x="363.500" y="401">Tangerhütte</text><text x="491" y="418">Genthin</text><text x="601" y="366.500">Havelsee</text><text x="382" y="499">Burg</text><text x="298" y="511.500">Wolmirstedt</text><text x="539.500" y="501.500">Ziesar</text><text x="417" y="576">Möckern</text><text class="l" x="303" y="582">Magdeburg</text>
          <text x="741" y="375">Ketzin/Havel</text><text x="634" y="408.500">Brandenburg<tspan x="634" dy="12.500">an der Havel</tspan></text><text class="l" x="820" y="421.500">Potsdam</text><text x="773.500" y="439">Werder (Havel)</text><text x="894.500" y="420">Teltow</text><text x="809.500" y="471.500">Michendorf</text><text x="893" y="480">Ludwigsfelde</text><text x="787.500" y="519">Beelitz</text><text x="876" y="531.500">Trebbin</text><text x="710" y="545">Brück</text><text x="647.500" y="576">Bad Belzig</text>
          <text x="1213" y="359.500">Müncheberg</text><text x="1072.500" y="405.500">Erkner</text><text x="1186" y="440">Fürstenwalde/<tspan x="1186" dy="12.500">Spree</tspan></text><text x="1025.500" y="481.500">Königs Wusterhausen</text><text x="993" y="502.500">Mittenwalde</text><text x="1137" y="509.500">Storkow (Mark)</text><text x="961" y="531">Zossen</text><text x="1252" y="557">Beeskow</text><text x="1020" y="578.500">Teupitz</text>
          <text x="1356.500" y="405.500">Lebus</text><text x="1478" y="389">Ośno Lubuskie</text><text x="1568.500" y="397">Sulęcin</text><text x="1362.500" y="450">Frankfurt<tspan x="1362.500" dy="12.500">(Oder)</tspan></text><text x="1467.500" y="455">Rzepin</text><text x="1556.500" y="473">Torzym</text><text x="1315" y="513">Müllrose</text><text x="1452" y="544.500">Cybinka</text><text x="1391.500" y="573.500">Eisenhüttenstadt</text>
          <text class="xl" x="939.500" y="352">Berlin</text>
          <g class="nature"><text class="big" x="592" y="252.500">Naturpark<tspan x="592" dy="14">Westhavelland</tspan></text><text class="big" x="813" y="547">Naturpark<tspan x="813" dy="14">Nuthe-</tspan><tspan x="813" dy="14">Nieplitz</tspan></text><text x="1194" y="314.500">Naturpark<tspan x="1194" dy="12">Märkische</tspan><tspan x="1194" dy="12">Schweiz</tspan></text><text x="323" y="338">Uchte-Tangerquellen<tspan x="323" dy="12">und Waldgebiete</tspan><tspan x="323" dy="12">nördlich</tspan><tspan x="323" dy="12">Uchtspringe</tspan></text></g>
          <text class="military" x="282" y="393">Truppenübungsplatz<tspan x="282" dy="12">Altmark</tspan></text>
        </g>
        <g transform="translate(820 240) scale(.333333)">
          <clipPath id="city"><path id="outline" d="M243 62L272 68 262 88 272 100 265 124 300 131 335 130 350 116 370 88 402 110 408 92 440 78 425 60 453 52 458 38 470 52 462 75 508 94 500 125 482 128 475 165 487 188 520 190 560 215 575 265 632 280 618 298 655 302 625 345 610 395 615 412 623 392 655 395 702 430 697 410 750 435 765 450 760 468 735 462 755 485 733 505 740 525 720 545 690 560 698 588 665 592 640 640 630 610 635 572 600 575 580 545 525 552 515 530 460 542 447 500 395 513 400 555 392 577 362 575 340 555 310 512 280 530 262 505 235 525 210 523 205 495 165 495 112 525 105 535 125 540 90 538 78 553 70 540 30 505 65 460 52 435 55 398 120 337 100 320 64 320 75 255 92 260 102 210 75 205 112 178 165 198 155 165 172 125 220 122 222 98 242 94Z"/></clipPath>
          <g clip-path="url(#city)"><path fill="#e2dedb" d="M0 0H810V675H0Z" opacity=".75"/><path fill="#b5d0a8" d="M120 350L180 335 240 400 200 460 130 480ZM80 190L240 150 240 220 120 260ZM590 420L740 440 740 540 640 640 560 530Z"/><g class="streets"><path d="M370 260L400 262 440 300 455 340 440 380 370 414 280 390 240 355 245 320 300 295 340 270ZM300 295L330 280M120 240L240 300M245 320L70 340M240 355L130 480M280 390L190 480M330 400L250 490M370 414L390 520M440 380L545 490M455 340L560 425 740 440M455 345L490 330 640 325M440 300L520 280 600 270M400 262L440 180 500 100M370 260L370 170M340 270L300 190 280 130M300 295L250 200 190 130M120 240L180 190M520 190L530 380 545 490 600 570M400 110L520 260M260 450L540 360M440 380L450 540M330 340L440 320M310 290L450 380M300 330L430 350M350 260L320 420M400 260L360 410M410 300L510 440M260 240L420 230M200 270L340 200M470 260L600 350M470 410L650 390M180 330L320 350M110 390L240 340M320 360L330 520M340 360L460 420M480 400L480 540M560 300L510 460M410 270L460 130M350 300L420 400M270 380L400 370M270 320L430 290M530 210L420 280M140 300L350 300M280 420L420 490"/><path class="water" d="M120 240L80 320 130 370M650 440L690 480 660 530 640 590M500 380L600 450"/><path class="mw" d="M200 130L270 210 260 280 240 330M240 350L330 400 430 415 500 480 520 530M400 110L425 160 410 200M150 480L140 520"/></g></g>
          <text class="capital" x="358" y="336">Berlin</text>
          <use href="#outline" class="area"/>
        </g>
      </svg>
      <div class="zoom"><a>+</a><a>−</a></div>
      <div class="credit"><svg width="12" height="8" viewBox="0 0 12 8"><path fill="#4C7BE1" d="M0 0h12v4H0z"/><path fill="#FFD500" d="M0 4h12v3H0z"/><path fill="#E0BC00" d="M0 7h12v1H0z"/></svg> <a>Leaflet</a> | © <a>OpenStreetMap</a> contributors</div>
    </div>
  </section>
  <section class="card"><pre class="meta">osm_id: 62422
display_name: Berlin, Deutschland</pre></section>
  <section class="card wiki">
    <div>Wikipedia search <small>(for population data)</small></div>
    <div class="links"><a>Wikipedia EN: berlin</a><a>Wikipedia DE: berlin</a></div>
  </section>
</main>
</body>
</html>
```

FILE: styles.css
```css
* { box-sizing: border-box; }
html { height: 100%; overflow: hidden; background: #121825; }
body { display: flow-root; margin: 0; height: 100%; overflow: hidden; background: #121825; color: #f3f4f6; font: 16px/24px Nunito, Lato, sans-serif; }
button { border: 0; color: #fff; font: inherit; }
.mode { position: fixed; top: 40px; right: 40px; width: 99px; height: 36px; padding: 0; border-radius: 4px; background: #4338c8; color: #e8eaff; font-size: 14px; line-height: 20px; }
.page { width: 1536px; margin: -82px auto 0; padding: 48px 48px 40px; border-radius: 8px; background: #212a35; box-shadow: 0 4px 6px -1px rgba(0,0,0,.1); display: flex; flex-direction: column; gap: 16px; }
.card { padding: 24px; border-radius: 8px; background: #394150; box-shadow: 0 1px 3px rgba(0,0,0,.15); }
.first { padding-bottom: 40px; }
.actions { display: grid; grid-template-columns: 1fr 1fr; gap: 16px; height: 48px; }
.btn { width: 174px; height: 48px; padding: 0; border-radius: 4px; }
.orange { background: #ae5418; }
.blue { background: #204fd6; }
.title { margin: 48px 0 16px; font-size: 16px; line-height: 24px; font-weight: 700; color: #fff; }
.map { position: relative; height: 454px; overflow: hidden; background: #f1f2de; }
.tiles { display: block; }
.tiles path { stroke-linejoin: round; stroke-linecap: round; }
.forest { fill: #c0dab5; }
.lawn { fill: #d9efc1; }
.town { fill: #dcdcd9; }
.park { fill: none; stroke: #9acb98; stroke-width: 5; }
.river { fill: none; stroke: #a9d2e1; stroke-width: 4.5; }
.lake { fill: #a5d0e0; }
.reserve { stroke: #7ba7df; stroke-width: 3; stroke-dasharray: 8 6; }
.range { fill: url(#hatch); stroke: #d79a80; stroke-width: 3; stroke-opacity: .7; }
.pink { fill: #f6d6cd; }
.minor, .rail, .primary, .trunk, .motorway, .border, .state, .frontier { fill: none; }
.minor { stroke: #bdbabf; stroke-width: 3; }
.rail { stroke: #777973; stroke-width: 3.6; }
.primary { stroke: #f8bb7e; stroke-width: 4; }
.trunk { stroke: #f1907a; stroke-width: 5.5; }
.motorway { stroke: #de6486; stroke-width: 6.2; }
.maroon { fill: none; stroke: #a85560; stroke-width: 6; }
.border { stroke: #ad9bb0; stroke-width: 5; }
.state { stroke: #758475; stroke-width: 5; }
.frontier { stroke: #877f8c; stroke-width: 10; stroke-opacity: .85; }
.labels { fill: #222; font: 10.1px "Noto Sans", sans-serif; text-anchor: middle; }
.labels text { paint-order: stroke; stroke: #fff; stroke-opacity: .62; stroke-width: 2.2px; stroke-linejoin: round; }
.labels .l { font-size: 11.8px; }
.labels .start { text-anchor: start; }
.labels .xl { display: none; }
.capital { font: 38px "Noto Sans", sans-serif; text-anchor: middle; fill: #333; }
.labels .nature { fill: #148324; font-style: italic; font-size: 9.9px; }
.labels .big { font-size: 12.2px; }
.labels .military { fill: #941c28; font-style: italic; font-size: 9.9px; }
.streets path { fill: none; stroke: #77757a; stroke-opacity: .5; stroke-width: 3.5; }
.streets .water { stroke: #91c8df; stroke-width: 7; }
.streets .mw { stroke: #d45482; stroke-width: 6; }
.area { fill: #3b70d0; fill-opacity: .52; stroke: #3b86ff; stroke-width: 9; stroke-linejoin: round; }
.zoom { position: absolute; left: 10px; top: 10px; border: 2px solid rgba(0,0,0,.2); border-radius: 4px; background-clip: padding-box; }
.zoom a { display: block; width: 30px; height: 30px; background: #fff; color: #000; text-align: center; font: bold 22px/30px "Liberation Mono", monospace; text-indent: 1px; }
.zoom a:first-child { border-bottom: 1px solid #ccc; border-radius: 2px 2px 0 0; line-height: 29px; }
.zoom a:last-child { border-radius: 0 0 2px 2px; line-height: 28px; }
.credit { position: absolute; right: 0; bottom: 0; padding: 0 5px; background: rgba(255,255,255,.8); color: #333; font: 11px/16px "Liberation Sans", sans-serif; white-space: nowrap; }
.credit svg { display: inline; }
.credit a { color: #0078a8; }
.meta { margin: 0; font: 16px/24px "Liberation Mono", monospace; }
.wiki > div { height: 24px; }
.wiki small { font-size: 14px; line-height: 20px; color: #9ca3af; }
.links { display: flex; gap: 8px; color: #ee9c26; text-decoration: underline; }
.links a { text-decoration: underline; }
```
